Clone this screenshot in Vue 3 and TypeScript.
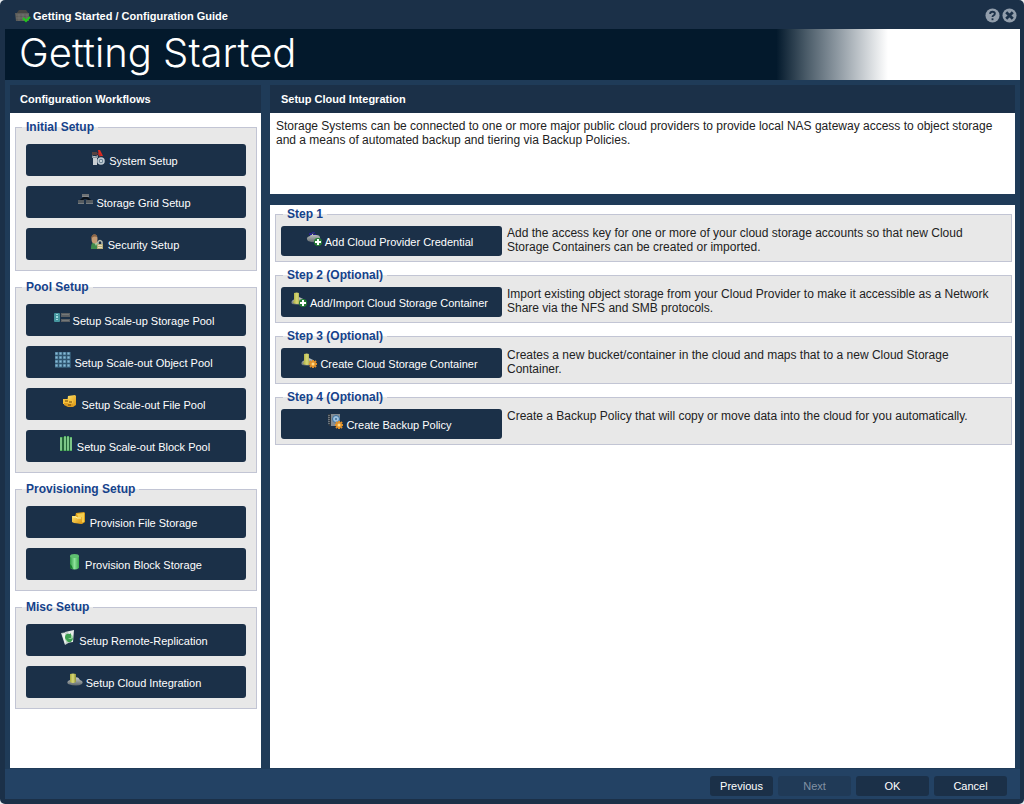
<script setup lang="ts">
interface Action {
  label: string
  icon: string
}
interface Group {
  title: string
  actions: Action[]
}
interface Step {
  title: string
  action: Action
  text: string
}

const groups: Group[] = [
  {
    title: 'Initial Setup',
    actions: [
      { label: 'System Setup', icon: 'tools' },
      { label: 'Storage Grid Setup', icon: 'grid' },
      { label: 'Security Setup', icon: 'user' },
    ],
  },
  {
    title: 'Pool Setup',
    actions: [
      { label: 'Setup Scale-up Storage Pool', icon: 'scaleup' },
      { label: 'Setup Scale-out Object Pool', icon: 'objects' },
      { label: 'Setup Scale-out File Pool', icon: 'files' },
      { label: 'Setup Scale-out Block Pool', icon: 'blocks' },
    ],
  },
  {
    title: 'Provisioning Setup',
    actions: [
      { label: 'Provision File Storage', icon: 'folder' },
      { label: 'Provision Block Storage', icon: 'volume' },
    ],
  },
  {
    title: 'Misc Setup',
    actions: [
      { label: 'Setup Remote-Replication', icon: 'replicate' },
      { label: 'Setup Cloud Integration', icon: 'cloud' },
    ],
  },
]

const steps: Step[] = [
  {
    title: 'Step 1',
    action: { label: 'Add Cloud Provider Credential', icon: 'credential' },
    text: 'Add the access key for one or more of your cloud storage accounts so that new Cloud Storage Containers can be created or imported.',
  },
  {
    title: 'Step 2 (Optional)',
    action: { label: 'Add/Import Cloud Storage Container', icon: 'cloudadd' },
    text: 'Import existing object storage from your Cloud Provider to make it accessible as a Network Share via the NFS and SMB protocols.',
  },
  {
    title: 'Step 3 (Optional)',
    action: { label: 'Create Cloud Storage Container', icon: 'cloudnew' },
    text: 'Creates a new bucket/container in the cloud and maps that to a new Cloud Storage Container.',
  },
  {
    title: 'Step 4 (Optional)',
    action: { label: 'Create Backup Policy', icon: 'policy' },
    text: 'Create a Backup Policy that will copy or move data into the cloud for you automatically.',
  },
]
</script>

<template>
  <svg class="defs" aria-hidden="true">
    <defs>
      <linearGradient id="g-gold" x1="0" y1="0" x2="1" y2="1">
        <stop offset="0" stop-color="#ffe36a" />
        <stop offset="1" stop-color="#dc9410" />
      </linearGradient>
      <linearGradient id="g-green" x1="0" y1="0" x2="1" y2="0">
        <stop offset="0" stop-color="#2f9a45" />
        <stop offset="0.5" stop-color="#8de29a" />
        <stop offset="1" stop-color="#3aa64e" />
      </linearGradient>
      <linearGradient id="g-olive" x1="0" y1="0" x2="1" y2="0">
        <stop offset="0" stop-color="#a9ab3f" />
        <stop offset="0.5" stop-color="#d9d977" />
        <stop offset="1" stop-color="#8f9138" />
      </linearGradient>
      <linearGradient id="g-cloud" x1="0" y1="0" x2="0" y2="1">
        <stop offset="0" stop-color="#c9ccc9" />
        <stop offset="1" stop-color="#5f686d" />
      </linearGradient>
      <pattern id="p-cells" width="4" height="4" patternUnits="userSpaceOnUse">
        <rect width="4" height="4" fill="#2f546f" />
        <rect width="3" height="3" rx="1" fill="#6497b5" />
        <rect x="1" y="1" width="1" height="1" fill="#8bbad2" />
      </pattern>
      <symbol id="i-tools" viewBox="0 0 16 16">
        <path d="M2 2h5v3H2z" fill="#59413f" />
        <path d="M3 6h4v9H3z" fill="#c9ced2" />
        <path d="M2 5l2 2 4-2v3H2z" fill="#8b959d" />
        <path d="M8 0h2l3 6H9z" fill="#e02b20" />
        <path d="M7 3l4 1-1 3z" fill="#b62a24" />
        <circle cx="11" cy="11" r="3" fill="#6f8697" stroke="#c2cdd5" stroke-width="1.5" />
        <circle cx="11" cy="11" r="1" fill="#e5ebee" />
      </symbol>
      <symbol id="i-grid" viewBox="0 0 16 16">
        <path d="M5 2h7v3H5z" fill="#6e7275" />
        <path d="M5 4h7v1H5z" fill="#85888a" />
        <path d="M8 5v2M3 9l4-3h3l4 3" fill="none" stroke="#0b1118" stroke-width="2" />
        <path d="M1 8h6v4H1zM9 8h7v4H9z" fill="#555b60" />
        <path d="M1 11h6v1H1zM9 11h7v1H9z" fill="#777d81" />
      </symbol>
      <symbol id="i-user" viewBox="0 0 16 16">
        <path d="M2 15c0-5 1-7 4-7s5 2 5 7z" fill="#3d8a4c" />
        <path d="M5 8l2 4 2-4z" fill="#a9cba4" />
        <ellipse cx="5.500" cy="5" rx="3" ry="4.500" fill="#c39a74" />
        <path d="M2 5c0-6 6-6 6-2-2-1-4-1-6 2z" fill="#8a6446" />
        <path d="M9 10V8q2-3 4 0v2" fill="none" stroke="#b8bcae" stroke-width="1.5" />
        <path d="M8 10h6v5H8z" fill="#b7ad79" />
        <path d="M9 11h4v1H9zM9 13h4v1H9z" fill="#e1dcbd" />
      </symbol>
      <symbol id="i-scaleup" viewBox="0 0 16 16">
        <rect x="0" y="3" width="6" height="9" rx="1" fill="#46969f" />
        <path d="M2 4h2v1H2zM2 6h2v2H2zM2 9h2v1H2z" fill="#9fdbe0" />
        <path d="M7 3h9v4H7zM7 9h9v3H7z" fill="#5b5f63" />
        <path d="M8 4h7v1H8zM8 10h7v1H8z" fill="#747879" />
      </symbol>
      <symbol id="i-objects" viewBox="0 0 16 16">
        <rect width="16" height="16" fill="url(#p-cells)" />
      </symbol>
      <symbol id="i-files" viewBox="0 0 16 16">
        <path d="M6 2l7-1 1 1v9l-3 2-6-2z" fill="url(#g-gold)" />
        <path d="M1 5h5l1 1h4v3H7l-2 1H1z" fill="#f6c13a" />
        <path d="M2 9h4l1 1h4v3H6l-4-2z" fill="#dc9b20" />
        <path d="M3 7h3M7 8h3M6 11h3" stroke="#6d450d" stroke-width="1" />
      </symbol>
      <symbol id="i-blocks" viewBox="0 0 16 16">
        <rect x="2" y="1" width="12" height="14" rx="1" fill="#246539" />
        <path d="M3 1v14M7 0v15M10 0v15M13 1v14" stroke="#55b166" stroke-width="2" />
        <path d="M3 2v12M7 1v13M10 1v13M13 2v12" stroke="#a4dba9" stroke-width="1" />
      </symbol>
      <symbol id="i-folder" viewBox="0 0 16 16">
        <path d="M5 1l8-1 1 1v9l-3 2-8-2z" fill="#dda01c" />
        <path d="M6 2l7-1v9l-4 1z" fill="#f7cf4e" />
        <path d="M1 4h4l1 1h5v7l-8-1-2-1z" fill="url(#g-gold)" />
        <path d="M2 5h3l1 1h4" fill="none" stroke="#fff0a0" />
      </symbol>
      <symbol id="i-volume" viewBox="0 0 16 16">
        <path d="M4 2v12q5 3 9 0V2z" fill="url(#g-green)" />
        <ellipse cx="8.500" cy="2" rx="4.500" ry="2" fill="#5fbf70" />
        <path d="M4 10q2 1 3 5l-3-1z" fill="#167a2b" />
      </symbol>
      <symbol id="i-replicate" viewBox="0 0 16 16">
        <path d="M5 2l9-2-1 12-7 1z" fill="#e7ecea" />
        <path d="M1 3l7-1 2 10-5 3z" fill="#c3ceca" />
        <path d="M2 4l3-1 1 9-1 2z" fill="#edf3f1" />
        <circle cx="9" cy="8" r="4" fill="#9bd6a2" />
        <path d="M5 8q0-5 5-4l1-1v5H8q2 2 5 0-1 5-5 4z" fill="#3d9f51" />
      </symbol>
      <symbol id="i-cloud" viewBox="0 0 16 16">
        <path d="M1 12q-2-3 2-4 1-4 5-2 3-2 5 2 4 1 2 4-5 3-14 0z" fill="url(#g-cloud)" />
        <path d="M3 2q3-1 6 0v8q-3 2-6 0z" fill="url(#g-olive)" />
      </symbol>
      <symbol id="i-plus" viewBox="0 0 16 16">
        <circle cx="12" cy="11" r="4" fill="#247d35" />
        <path d="M12 8v6M9 11h6" stroke="#fff" stroke-width="2" />
      </symbol>
      <symbol id="i-spark" viewBox="0 0 16 16">
        <path d="M12 7v8M8 11h8M9 8l6 6M15 8l-6 6" stroke="#e4922a" stroke-width="2" />
        <circle cx="12" cy="11" r="1.500" fill="#ffd983" />
      </symbol>
      <symbol id="i-credential" viewBox="0 0 16 16">
        <path d="M2 10q-3-4 2-5 2-4 6-1 5 0 4 5-4 4-12 1z" fill="url(#g-cloud)" />
        <path d="M3 2h3v2H3zM7 3h3v1H7zM6 1h3v1H6z" fill="#29218e" />
        <use href="#i-plus" />
      </symbol>
      <symbol id="i-container" viewBox="0 0 16 16">
        <path d="M1 12q-2-3 3-5 4-3 6-1 4 1 4 5-5 3-13 1z" fill="url(#g-cloud)" />
        <path d="M3 1q3-1 5 0v7l2 3q-4 2-8 0l1-3z" fill="url(#g-olive)" />
      </symbol>
      <symbol id="i-cloudadd" viewBox="0 0 16 16">
        <use href="#i-container" />
        <use href="#i-plus" />
      </symbol>
      <symbol id="i-cloudnew" viewBox="0 0 16 16">
        <use href="#i-container" />
        <use href="#i-spark" />
      </symbol>
      <symbol id="i-policy" viewBox="0 0 16 16">
        <path d="M1 0h12v12H2z" fill="#858d94" />
        <path d="M1 0h3v12H2z" fill="#30373e" />
        <path d="M2 1v10" stroke="#a2a8ac" stroke-dasharray="1 1" />
        <circle cx="9" cy="5" r="3.500" fill="#9ec1df" stroke="#3a6e9c" />
        <path d="M8 4h2v2H8z" fill="#5483a9" />
        <use href="#i-spark" />
      </symbol>
    </defs>
  </svg>
  <main class="window">
    <header class="titlebar">
      <svg class="app-icon" viewBox="0 0 16 16" aria-hidden="true">
        <path d="M4 2h7l3 4H1z" fill="#454543" />
        <path d="M0 5h14v8H1z" fill="#5c5c59" />
        <path d="M1 7h13M1 10h13M4 6v7M8 6v7M12 6v7" stroke="#7f7e7a" stroke-width="0.5" />
        <path d="M8 10l3 3 4-4" fill="none" stroke="#20c51d" stroke-width="2" />
      </svg>
      <h2 class="window-title">Getting Started / Configuration Guide</h2>
      <button class="tool" type="button" aria-label="Help">
        <svg viewBox="0 0 16 16" aria-hidden="true">
          <circle cx="8" cy="8" r="7.500" fill="#929eac" />
          <path d="M5.500 6.500q0-2.500 2.500-2.500t2.500 2q0 1.200-1.500 2-1 .5-1 1.500" fill="none" stroke="#1b3048" stroke-width="2" />
          <path d="M7 11h2v2H7z" fill="#1b3048" />
        </svg>
      </button>
      <button class="tool" type="button" aria-label="Close">
        <svg viewBox="0 0 16 16" aria-hidden="true">
          <circle cx="8" cy="8" r="7.500" fill="#929eac" />
          <path d="M4.500 4.500l7 7M11.500 4.500l-7 7" stroke="#1b3048" stroke-width="3" />
        </svg>
      </button>
    </header>

    <div class="banner"><h1>Getting Started</h1></div>

    <div class="body">
      <nav class="workflows" aria-label="Configuration Workflows">
        <h3 class="panel-head">Configuration Workflows</h3>
        <div class="side-panel">
          <fieldset v-for="group in groups" :key="group.title" class="group">
            <legend>{{ group.title }}</legend>
            <button v-for="action in group.actions" :key="action.label" class="action" type="button">
              <svg class="icon" aria-hidden="true"><use :href="'#i-' + action.icon" /></svg>
              <span>{{ action.label }}</span>
            </button>
          </fieldset>
        </div>
      </nav>

      <section class="detail">
        <h3 class="panel-head">Setup Cloud Integration</h3>
        <p class="summary">
          Storage Systems can be connected to one or more major public cloud providers to provide local NAS gateway
          access to object storage and a means of automated backup and tiering via Backup Policies.
        </p>
        <div class="steps">
          <fieldset v-for="step in steps" :key="step.title" class="step">
            <legend>{{ step.title }}</legend>
            <div class="step-row">
              <button class="action" type="button">
                <svg class="icon" aria-hidden="true"><use :href="'#i-' + step.action.icon" /></svg>
                <span>{{ step.action.label }}</span>
              </button>
              <p>{{ step.text }}</p>
            </div>
          </fieldset>
        </div>
      </section>
    </div>

    <footer class="footer">
      <button class="nav previous" type="button">Previous</button>
      <button class="nav" type="button" disabled>Next</button>
      <button class="nav" type="button">OK</button>
      <button class="nav" type="button">Cancel</button>
    </footer>
  </main>
</template>

<style>
body {
  background: #e8ecef;
}
</style>

<style scoped>
* {
  box-sizing: border-box;
}
h1,
h2,
h3,
p {
  margin: 0;
}
button {
  padding: 0;
  border: 0;
  font: inherit;
  cursor: pointer;
}
.defs {
  position: absolute;
  width: 0;
  height: 0;
}
.window {
  display: flex;
  flex-direction: column;
  min-height: 100vh;
  padding: 0 4px 5px 5px;
  border-radius: 5px;
  background: #1b3048;
  font: 11px/14px "Liberation Sans", Arial, sans-serif;
}
.titlebar {
  display: flex;
  align-items: center;
  gap: 2px;
  height: 29px;
  padding: 2px 3px 0 10px;
}
.app-icon {
  width: 16px;
  height: 16px;
}
.window-title {
  flex: 1;
  color: #fff;
  font-size: 11px;
  line-height: 14px;
}
.tool {
  width: 15px;
  height: 15px;
  background: none;
}
.tool svg {
  display: block;
  width: 15px;
  height: 15px;
}
.banner {
  height: 51px;
  padding-left: 14px;
  background: linear-gradient(to right, #03192c 76%, #4b5c69 79%, #8d98a1 82%, #fff 87%);
}
h1 {
  color: #fff;
  font: 300 40px/48px Inter, "Liberation Sans", sans-serif;
}
.body {
  flex: 1;
  display: flex;
  gap: 9px;
  padding: 5px 5px 1px;
  background: #1f3b58;
}
.workflows {
  display: flex;
  flex-direction: column;
  width: 251px;
}
.detail {
  flex: 1;
  display: flex;
  flex-direction: column;
}
.panel-head {
  height: 28px;
  padding: 0 11px;
  background: #1b3048;
  color: #fff;
  font-size: 11px;
  line-height: 28px;
}
.workflows .panel-head {
  padding: 0 10px;
}
.side-panel {
  flex: 1;
  padding: 7px 4px 7px 5px;
  background: #fff;
}
fieldset {
  min-width: 0;
  margin: 0;
  border: 1px solid #c2c5d4;
  background: #e8e8e8;
}
legend {
  padding: 0 4px;
  color: #15428b;
  font-size: 12px;
  font-weight: bold;
  line-height: 14px;
}
.group {
  display: flex;
  flex-direction: column;
  gap: 10px;
  margin-bottom: 9px;
  padding: 10px 10px 10px 6px;
}
.group .action {
  width: calc(100% - 4px);
  height: 32px;
  margin-left: 4px;
}
.action {
  display: flex;
  flex: none;
  align-items: center;
  justify-content: center;
  gap: 3px;
  padding-right: 4px;
  border-radius: 3px;
  background: #1b3048;
  color: #fff;
  line-height: 14px;
}
.icon {
  width: 16px;
  height: 16px;
  margin-bottom: 5px;
}
.action span {
  padding-top: 2px;
}
.summary {
  height: 81px;
  padding: 6px;
  background: #fff;
  color: #222;
  font-size: 12px;
}
.steps {
  flex: 1;
  display: flex;
  flex-direction: column;
  gap: 6px;
  margin-top: 11px;
  padding: 2px 3px 6px 5px;
  background: #fff;
}
.step {
  padding: 5px 6px 5px 5px;
}
.step legend {
  margin-left: 2px;
}
.step-row {
  display: flex;
  gap: 5px;
}
.step .action {
  width: 221px;
  height: 30px;
}
.step p {
  height: 30px;
  max-width: 490px;
  color: #222;
  font-size: 12px;
}
.footer {
  display: flex;
  gap: 5px;
  height: 30px;
  padding: 7px 13px 3px 0;
  justify-content: flex-end;
  background: #234264;
}
.nav {
  width: 73px;
  height: 20px;
  border-radius: 3px;
  background: #1b3048;
  color: #fff;
}
.previous {
  width: 63px;
}
.nav:disabled {
  background: #203a57;
  color: #8292a4;
}
</style>
